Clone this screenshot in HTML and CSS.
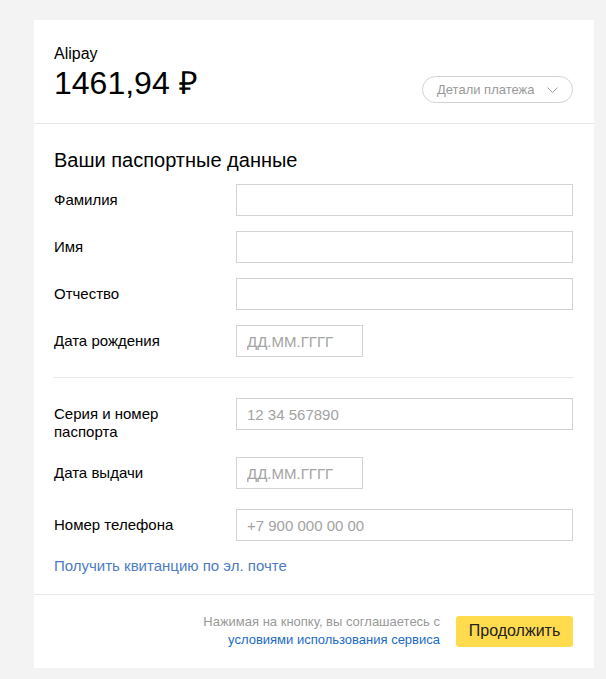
FILE: index.html
```html
<!DOCTYPE html>
<html lang="ru">
<head>
<meta charset="utf-8">
<title>Оплата</title>
<link rel="stylesheet" href="styles.css">
</head>
<body>
<div class="card">
  <div class="header">
    <div class="merchant">
      <div class="merchant-name">Alipay</div>
      <div class="amount">1461,94 ₽</div>
    </div>
    <button class="details" type="button">Детали платежа
      <svg class="chevron" width="11" height="6" viewBox="0 0 11 6"><polyline points="0.5,0.5 5.5,5.5 10.5,0.5" fill="none" stroke="#a0a0a0" stroke-width="1"/></svg>
    </button>
  </div>
  <div class="body">
    <h2 class="title">Ваши паспортные данные</h2>
    <div class="form-group">
      <label class="label">Фамилия</label><input class="field" type="text">
      <label class="label">Имя</label><input class="field" type="text">
      <label class="label">Отчество</label><input class="field" type="text">
      <label class="label">Дата рождения</label><input class="field field-date" type="text" placeholder="ДД.ММ.ГГГГ">
    </div>
    <div class="sep"></div>
    <div class="form-group">
      <label class="label label-multi">Серия и номер<br>паспорта</label><input class="field" type="text" placeholder="12 34 567890">
      <label class="label">Дата выдачи</label><input class="field field-date" type="text" placeholder="ДД.ММ.ГГГГ">
      <label class="label label-phone">Номер телефона</label><input class="field field-phone" type="text" placeholder="+7 900 000 00 00">
    </div>
    <a class="receipt" href="#">Получить квитанцию по эл. почте</a>
  </div>
  <div class="footer">
    <div class="terms">Нажимая на кнопку, вы соглашаетесь с<br><a class="terms-link" href="#">условиями использования сервиса</a></div>
    <button class="submit" type="button">Продолжить</button>
  </div>
</div>
</body>
</html>
```
FILE: styles.css
```css
* { box-sizing: border-box; }
html, body { margin: 0; padding: 0; }
body {
  background: #f3f3f3;
  font-family: "Liberation Sans", Arial, sans-serif;
  color: #000;
  width: 606px;
  height: 679px;
  overflow: hidden;
}
.card {
  background: #fff;
  margin: 20px 0 0 34px;
  width: 560px;
}
.header {
  display: flex;
  justify-content: space-between;
  align-items: flex-end;
  padding: 24px 21px 20px 20px;
  border-bottom: 1px solid #e6e6e6;
}
.merchant-name {
  font-size: 16px;
  line-height: 20px;
}
.amount {
  font-size: 32px;
  line-height: 39px;
}
.details {
  display: flex;
  align-items: center;
  gap: 12px;
  height: 27px;
  width: 151px;
  padding: 0 0 0 14px;
  border: 1px solid #d2d2d2;
  border-radius: 14px;
  background: #fff;
  font-family: inherit;
  font-size: 13px;
  color: #999;
}
.chevron { display: block; margin-top: 1px; }
.body {
  padding: 24px 21px 19px 20px;
}
.title {
  margin: 0 0 12px;
  font-size: 20px;
  line-height: 24px;
  font-weight: normal;
}
.form-group {
  display: grid;
  grid-template-columns: 182px 1fr;
  row-gap: 15px;
  align-items: start;
}
.label {
  font-size: 15px;
  line-height: 18px;
  padding-top: 7px;
}
.label-multi { padding-bottom: 1px; }
.field {
  height: 32px;
  width: 100%;
  border: 1px solid #d3d3d3;
  padding: 0 10px;
  font-family: inherit;
  font-size: 15px;
  color: #000;
  background: #fff;
  outline: none;
}
.field::placeholder { color: #a3a3a3; }
.field-date { width: 127px; }
.label-phone, .field-phone { margin-top: 5px; }
.sep {
  height: 1px;
  background: #e6e6e6;
  margin: 20px 0 20px;
}
.receipt {
  display: block;
  margin-top: 16px;
  font-size: 15px;
  line-height: 18px;
  color: #4d7cc3;
  text-decoration: none;
}
.footer {
  display: flex;
  justify-content: flex-end;
  align-items: center;
  gap: 16px;
  padding: 18px 21px 19px 20px;
  border-top: 1px solid #e6e6e6;
}
.terms {
  text-align: right;
  font-size: 13px;
  line-height: 18px;
  color: #999;
}
.terms-link {
  color: #1a6bc4;
  text-decoration: none;
}
.submit {
  height: 31px;
  width: 117px;
  border: none;
  border-radius: 3px;
  background: #ffdb4d;
  font-family: inherit;
  font-size: 16px;
  color: #222;
  padding: 0;
}
```
